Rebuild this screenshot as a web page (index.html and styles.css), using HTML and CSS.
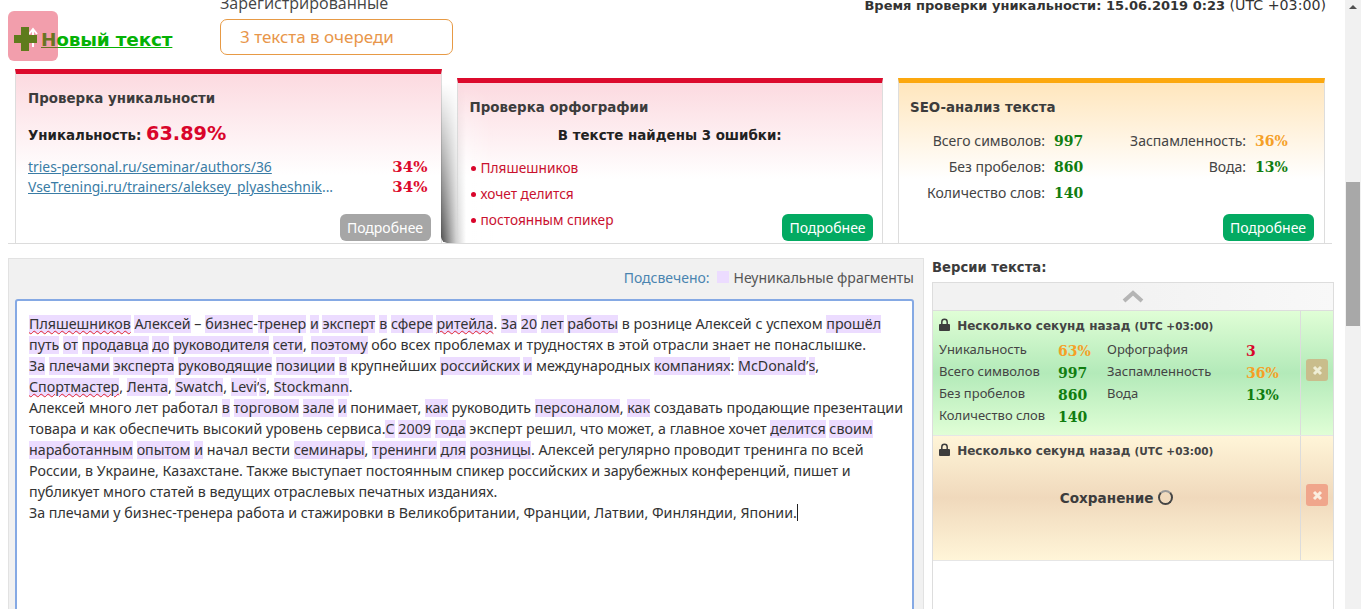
FILE: index.html
```html
<!DOCTYPE html>
<html lang="ru">
<head>
    <meta charset="UTF-8">
    <title>Проверка текста</title>
    <link rel="stylesheet" href="styles.css">
</head>
<body>
    <div class="page">
        <!-- верхняя строка -->
        <div class="top-bar">
            <div class="new-text">
                <a class="new-link" href="#">Новый текст</a>
                <div class="new-tile">
                    <svg width="50" height="50" viewBox="0 0 50 50">
                        <path d="M25 36V19M21 23l4-5 4 5" fill="none" stroke="#fff" stroke-width="2"/>
                        <path d="M13 16h8v8h8v8h-8v8h-8v-8H6v-8h7z" fill="#5f7b1c"/>
                    </svg>
                </div>
            </div>
            <div class="queue">
                <div class="queue-label">Зарегистрированные</div>
                <div class="queue-box">3 текста в очереди</div>
            </div>
            <div class="check-time">Время проверки уникальности: 15.06.2019 0:23 <span class="utc">(UTC +03:00)</span></div>
        </div>

        <!-- карточки -->
        <div class="cards">
            <div class="card card-red card-first">
                <div class="card-title">Проверка уникальности</div>
                <div class="uniq">Уникальность: <span class="uniq-value">63.89%</span></div>
                <div class="source-row"><a href="#">tries-personal.ru/seminar/authors/36</a><span>34%</span></div>
                <div class="source-row"><a href="#">VseTreningi.ru/trainers/aleksey_plyasheshnik</a><i>...</i><span>34%</span></div>
                <button class="more-btn more-gray">Подробнее</button>
            </div>
            <div class="card card-red card-low card-shade">
                <div class="card-title">Проверка орфографии</div>
                <div class="errors-title">В тексте найдены 3 ошибки:</div>
                <ul class="errors">
                    <li>Пляшешников</li>
                    <li>хочет делится</li>
                    <li>постоянным спикер</li>
                </ul>
                <button class="more-btn">Подробнее</button>
            </div>
            <div class="card card-orange card-low">
                <div class="card-title">SEO-анализ текста</div>
                <div class="seo">
                    <span class="seo-name">Всего символов:</span><b class="num">997</b>
                    <span class="seo-name">Заспамленность:</span><b class="num orange">36%</b>
                    <span class="seo-name">Без пробелов:</span><b class="num">860</b>
                    <span class="seo-name">Вода:</span><b class="num">13%</b>
                    <span class="seo-name">Количество слов:</span><b class="num">140</b>
                </div>
                <button class="more-btn">Подробнее</button>
            </div>
        </div>

        <div class="workspace">
            <!-- редактор -->
            <div class="editor-panel">
                <div class="legend"><span class="legend-name">Подсвечено:</span><span class="legend-box"></span>Неуникальные фрагменты</div>
                <div class="editor">
                    <u>Пляшешников</u> <em>Алексей</em> – <em>бизнес</em>-<em>тренер</em> <em>и</em> <em>эксперт</em> <em>в</em> <em>сфере</em> <u>ритейла</u>. <em>За</em> <em>20</em> <em>лет</em> <em>работы</em> в рознице Алексей с успехом <em>прошёл</em><br>
                    <em>путь</em> <em>от</em> <em>продавца</em> <em>до</em> <em>руководителя</em> <em>сети</em>, <em>поэтому</em> обо всех проблемах и трудностях в этой отрасли знает не понаслышке.<br>
                    <em>За</em> <em>плечами</em> <em>эксперта</em> <em>руководящие</em> <em>позиции</em> <em>в</em> крупнейших <em>российских</em> <em>и</em> международных <em>компаниях</em>: <em>McDonald</em>’<em>s</em>,<br>
                    <u>Спортмастер</u>, <em>Лента</em>, <em>Swatch</em>, <em>Levi</em>’<em>s</em>, <em>Stockmann</em>.<br>
                    Алексей много лет работал <em>в</em> <em>торговом</em> <em>зале</em> <em>и</em> понимает, <em>как</em> руководить <em>персоналом</em>, <em>как</em> создавать продающие презентации<br>
                    товара и как обеспечить высокий уровень сервиса.<em>С</em> <em>2009</em> <em>года</em> эксперт решил, что может, а главное хочет <em>делится</em> <em>своим</em><br>
                    <em>наработанным</em> <em>опытом</em> <em>и</em> начал вести <em>семинары</em>, <em>тренинги</em> <em>для</em> <em>розницы</em>. Алексей регулярно проводит тренинга по всей<br>
                    России, в Украине, Казахстане. Также выступает постоянным спикер российских и зарубежных конференций, пишет и<br>
                    публикует много статей в ведущих отраслевых печатных изданиях.<br>
                    За плечами у бизнес-тренера работа и стажировки в Великобритании, Франции, Латвии, Финляндии, Японии.<span class="caret"></span>
                </div>
            </div>

            <!-- версии -->
            <div class="versions">
                <div class="versions-title">Версии текста:</div>
                <div class="versions-box">
                    <div class="versions-up">
                        <svg width="22" height="13" viewBox="0 0 22 13"><path d="M2 11l9-8 9 8" fill="none" stroke="#b5b5b5" stroke-width="4"/></svg>
                    </div>
                    <div class="version version-green">
                        <div class="version-body">
                            <div class="version-head">
                                <svg class="lock" width="11" height="13" viewBox="0 0 11 13"><path d="M1 6h9a1 1 0 0 1 1 1v5a1 1 0 0 1-1 1H1a1 1 0 0 1-1-1V7a1 1 0 0 1 1-1z" fill="#3d3d3d"/><path d="M2.800 6V4a2.700 2.700 0 0 1 5.400 0v2" fill="none" stroke="#3d3d3d" stroke-width="1.500"/></svg>
                                Несколько секунд назад <span class="utc">(UTC +03:00)</span>
                            </div>
                            <div class="stats">
                                <span>Уникальность</span><b class="num orange">63%</b><span>Орфография</span><b class="num red">3</b>
                                <span>Всего символов</span><b class="num">997</b><span>Заспамленность</span><b class="num orange">36%</b>
                                <span>Без пробелов</span><b class="num">860</b><span>Вода</span><b class="num">13%</b>
                                <span>Количество слов</span><b class="num">140</b>
                            </div>
                        </div>
                        <div class="version-side">
                            <span class="del del-green">
                                <svg width="11" height="11" viewBox="0 0 11 11"><path d="M2 2l7 7M9 2l-7 7" stroke="#efeed6" stroke-width="3"/></svg>
                            </span>
                        </div>
                    </div>
                    <div class="version version-sand">
                        <div class="version-body">
                            <div class="version-head">
                                <svg class="lock" width="11" height="13" viewBox="0 0 11 13"><path d="M1 6h9a1 1 0 0 1 1 1v5a1 1 0 0 1-1 1H1a1 1 0 0 1-1-1V7a1 1 0 0 1 1-1z" fill="#3d3d3d"/><path d="M2.800 6V4a2.700 2.700 0 0 1 5.400 0v2" fill="none" stroke="#3d3d3d" stroke-width="1.500"/></svg>
                                Несколько секунд назад <span class="utc">(UTC +03:00)</span>
                            </div>
                            <div class="saving">Сохранение <span class="spinner"></span></div>
                        </div>
                        <div class="version-side">
                            <span class="del del-sand">
                                <svg width="11" height="11" viewBox="0 0 11 11"><path d="M2 2l7 7M9 2l-7 7" stroke="#fbeee0" stroke-width="3"/></svg>
                            </span>
                        </div>
                    </div>
                </div>
            </div>
        </div>
    </div>

    <!-- полоса прокрутки -->
    <div class="scrollbar">
        <div class="scroll-up"></div>
        <div class="scroll-thumb"></div>
    </div>
</body>
</html>
```

FILE: styles.css
```css
/* базовые стили */
* {
    box-sizing: border-box;
}

html, body {
    margin: 0;
    height: 609px;
    overflow: hidden;
}

body {
    display: flex;
    background: #fff;
    color: #333;
    font-family: "Noto Sans", sans-serif;
    font-size: 14px;
}

.page {
    flex: 1;
    min-width: 0;
    padding: 0 0 0 8px;
}

/* верхняя строка */
.top-bar {
    display: flex;
    height: 69px;
    margin-top: -9px;
    margin-bottom: 9px;
}

.new-text {
    position: relative;
    width: 212px;
    padding: 38px 0 0 33px;
}

.new-link {
    color: #05b205;
    font-size: 18.5px;
    font-weight: bold;
    font-family: "DejaVu Sans", sans-serif;
    letter-spacing: -0.2px;
}

.new-tile {
    position: absolute;
    left: 0;
    top: 20px;
    width: 50px;
    height: 50px;
    border-radius: 6px;
    background: rgba(226, 40, 70, 0.45);
}

.queue-label {
    font-size: 16px;
    color: #444;
    height: 28px;
    padding-top: 1px;
    font-family: "Open Sans", sans-serif;
}

.queue-box {
    width: 233px;
    height: 36px;
    border: 1px solid #e79a45;
    border-radius: 7px;
    color: #e8964a;
    font-size: 17px;
    line-height: 33px;
    padding-left: 19px;
}

.check-time {
    margin-left: auto;
    margin-right: 19px;
    padding-top: 6px;
    font-family: "DejaVu Sans", sans-serif;
    font-weight: bold;
    font-size: 13px;
    color: #333;
}

.check-time .utc {
    font-size: 14.2px;
}

.utc {
    font-weight: normal;
}

/* карточки */
.cards {
    display: flex;
    align-items: flex-end;
    gap: 15px;
    height: 175px;
    padding-left: 7px;
    width: 1324px;
    border-bottom: 1px solid #dcdcdc;
}

.card {
    position: relative;
    width: 426.5px;
    height: 174px;
    padding: 17px 12px 0;
    border-top: 5px solid #dc0a2c;
    border-left: 1px solid #ddd;
    border-right: 1px solid #ddd;
    background: linear-gradient(#fcdae0, #fff 60%);
}

.card-first {
    padding-right: 13px;
}

.card-low {
    height: 165px;
}

.card-orange {
    padding-left: 11px;
    border-top-color: #fca80e;
    background: linear-gradient(#ffe6bd, #fff 60%);
}

/* серая тень слева от средней карточки */
.card-shade::before {
    content: "";
    position: absolute;
    left: -17px;
    top: 0;
    bottom: 0;
    width: 52px;
    border-bottom-left-radius: 6px;
    background: linear-gradient(90deg, #4f4f4f, #d0d0d0 15px, #fff 25px, rgba(255, 255, 255, 0) 52px);
    -webkit-mask-image: linear-gradient(transparent, #000);
    mask-image: linear-gradient(transparent, #000);
}

.card-shade > * {
    position: relative;
}

.card-title {
    font-family: "DejaVu Sans", sans-serif;
    font-size: 13.4px;
    font-weight: bold;
    color: #3c3c3c;
}

.uniq {
    margin-top: 16px;
    margin-bottom: 12px;
    font-family: "DejaVu Sans", sans-serif;
    font-size: 13.4px;
    font-weight: bold;
    color: #222;
}

.uniq-value {
    font-size: 19.3px;
    color: #d9052b;
}

.source-row {
    display: flex;
    height: 20px;
    font-size: 13.9px;
    line-height: 20px;
    color: #3a7ca5;
}

.source-row a {
    color: #3a7ca5;
}

.source-row i {
    font-style: normal;
}

.source-row span {
    margin-left: auto;
    color: #dc0a2c;
    font-weight: bold;
    font-size: 15px;
    font-family: "DejaVu Serif", serif;
}

.more-btn {
    position: absolute;
    right: 9px;
    bottom: 2px;
    width: 91px;
    height: 27px;
    border: none;
    border-radius: 6px;
    background: #03aa62;
    color: #fff;
    font-family: "Noto Sans", sans-serif;
    font-size: 14px;
    padding: 0;
}

.card-shade > .more-btn {
    position: absolute;
}

.card-orange .more-btn {
    right: 10px;
}

.more-gray {
    right: 10px;
    background: #a6a6a6;
}

.errors-title {
    margin-top: 13px;
    text-align: center;
    font-family: "DejaVu Sans", sans-serif;
    font-size: 13.4px;
    font-weight: bold;
    color: #222;
}

.errors {
    list-style: none;
    margin: 12px 0 0;
    padding: 0;
    color: #c9112f;
}

.errors li {
    height: 26px;
    font-size: 13.7px;
    line-height: 26px;
}

.errors li::before {
    content: "";
    display: inline-block;
    width: 5px;
    height: 5px;
    margin: 0 5px 2px 1px;
    border-radius: 50%;
    background: #d9052b;
}

.seo {
    display: grid;
    grid-template-columns: 144px 44px 157px 46px;
    grid-auto-rows: 26px;
    margin-top: 13px;
    line-height: 26px;
}

.seo-name {
    text-align: right;
    padding-right: 9px;
    color: #444;
}

.num {
    font-family: "DejaVu Serif", serif;
    font-size: 14px;
    font-weight: bold;
    color: #107d10;
}

.num.orange {
    color: #f5a027;
}

.num.red {
    color: #d9052b;
}

/* рабочая область */
.workspace {
    display: flex;
    margin-top: 14px;
}

.editor-panel {
    width: 916px;
    height: 360px;
    padding: 0 9px 0 6px;
    background: #f1f1f1;
    border: 1px solid #e2e2e2;
}

.legend {
    display: flex;
    align-items: center;
    justify-content: flex-end;
    height: 40px;
    padding-bottom: 4px;
    color: #555;
}

.legend-name {
    color: #4a84b0;
}

.legend-box {
    width: 12px;
    height: 12px;
    margin: 0 5px 0 7px;
    background: #ecdcff;
}

.editor {
    height: 320px;
    padding: 12px 12px;
    background: #fff;
    border: 2px solid #85a9e4;
    border-radius: 3px 3px 0 0;
    font-size: 14.25px;
    line-height: 21px;
    white-space: nowrap;
    color: #333;
}

.editor em,
.editor u {
    display: inline-block;
    line-height: 18px;
    font-style: normal;
    background: #ecdcff;
}

.editor em {
    text-decoration: none;
}

.editor u {
    text-decoration: underline wavy #e0222e 1px;
}

.caret {
    display: inline-block;
    width: 1px;
    height: 17px;
    background: #222;
    vertical-align: -3px;
}

/* версии */
.versions {
    width: 402px;
    margin-left: 8px;
}

.versions-title {
    height: 24px;
    padding-top: 2px;
    font-family: "DejaVu Sans", sans-serif;
    font-size: 13.2px;
    font-weight: bold;
    color: #3c3c3c;
}

.versions-box {
    height: 360px;
    border: 1px solid #ddd;
}

.versions-up {
    display: flex;
    align-items: center;
    justify-content: center;
    height: 28px;
    background: linear-gradient(90deg, #f2f2f2 45%, #f8f8f8);
    border-bottom: 1px solid #ddd;
}

.version {
    display: flex;
    height: 125px;
    border-bottom: 1px solid #e6e6e6;
}

.version-green {
    background: linear-gradient(#e0fed6, #b3eab9 50%, #e0fed6);
}

.version-sand {
    background: linear-gradient(#fff5d8, #f0d9bc 50%, #fff5d8);
}

.version-body {
    flex: 1;
    min-width: 0;
    padding: 7px 6px 0;
}

.version-side {
    display: flex;
    flex: none;
    align-items: center;
    justify-content: center;
    width: 33px;
    padding-bottom: 6px;
    border-left: 1px solid #dcdcdc;
}

.version-head {
    font-family: "DejaVu Sans", sans-serif;
    font-size: 12px;
    line-height: 17px;
    font-weight: bold;
    color: #444;
}

.version-head .utc {
    font-size: 10.5px;
    font-weight: bold;
}

.lock {
    margin-right: 3px;
    vertical-align: -1px;
}

.stats {
    display: grid;
    grid-template-columns: 119px 49px 139px 48px;
    grid-auto-rows: 22px;
    margin-top: 3px;
    font-size: 13px;
    line-height: 22px;
    color: #444;
}

.stats .num {
    line-height: 26px;
}

.saving {
    margin-top: 30px;
    text-align: center;
    font-family: "DejaVu Sans", sans-serif;
    font-weight: bold;
    font-size: 13.6px;
    color: #3c3c3c;
}

.spinner {
    display: inline-block;
    width: 15px;
    height: 15px;
    border: 2px solid #444;
    border-top-color: #999;
    border-radius: 50%;
    vertical-align: -2px;
}

.del {
    display: flex;
    align-items: center;
    justify-content: center;
    width: 22px;
    height: 22px;
    border-radius: 3px;
}

.del-green {
    background: #c9bd8c;
}

.del-sand {
    background: #f0a68c;
}

/* полоса прокрутки */
.scrollbar {
    position: relative;
    flex: none;
    width: 16px;
    background: #f1f1f1;
}

.scroll-up {
    position: absolute;
    top: 5px;
    left: 4px;
    border: 4px solid transparent;
    border-top: none;
    border-bottom: 4px solid #505050;
}

.scroll-thumb {
    position: absolute;
    top: 182px;
    left: 1px;
    width: 14px;
    height: 144px;
    background: #a8a8a8;
}
```
